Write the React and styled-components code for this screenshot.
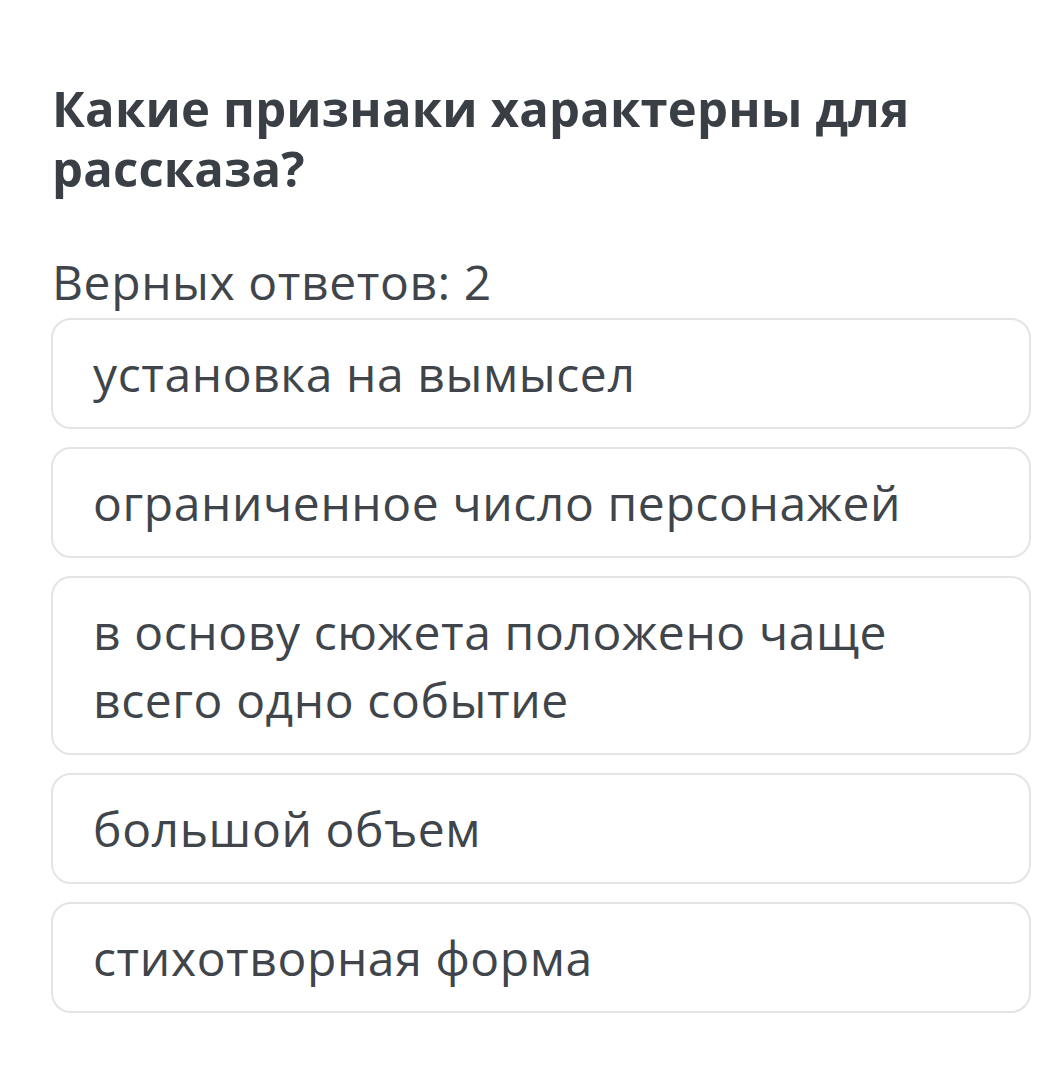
import React from 'react'
import styled, { createGlobalStyle } from 'styled-components'

const GlobalStyle = createGlobalStyle`
  body {
    margin: 0;
    background: #ffffff;
    font-family: 'Open Sans', 'Noto Sans', sans-serif;
  }
`

const Page = styled.div`
  padding: 78px 25px 40px 51px;
`

const Title = styled.h1`
  margin: 0 0 0 1px;
  font-size: 49px;
  line-height: 60px;
  letter-spacing: 0.2px;
  font-weight: 700;
  color: #3a3f46;
`

const Hint = styled.div`
  margin: 50px 0 2px 1px;
  font-size: 48px;
  line-height: 68px;
  letter-spacing: 0.6px;
  color: #40454b;
`

const Options = styled.div`
  display: flex;
  flex-direction: column;
  gap: 18px;
`

const Option = styled.div`
  border: 2px solid #e4e4e4;
  border-radius: 20px;
  padding: 20px 40px 19px 40px;
  font-size: 48px;
  line-height: 68px;
  letter-spacing: 0.6px;
  color: #40454b;
`

const answers = [
  'установка на вымысел',
  'ограниченное число персонажей',
  'в основу сюжета положено чаще всего одно событие',
  'большой объем',
  'стихотворная форма',
]

const App = () => {
  return (
    <>
      <GlobalStyle />
      <Page>
        <Title>
          Какие признаки характерны для
          <br />
          рассказа?
        </Title>
        <Hint>Верных ответов: 2</Hint>
        <Options>
          {answers.map((a) => (
            <Option key={a}>{a}</Option>
          ))}
        </Options>
      </Page>
    </>
  )
}

export default App
